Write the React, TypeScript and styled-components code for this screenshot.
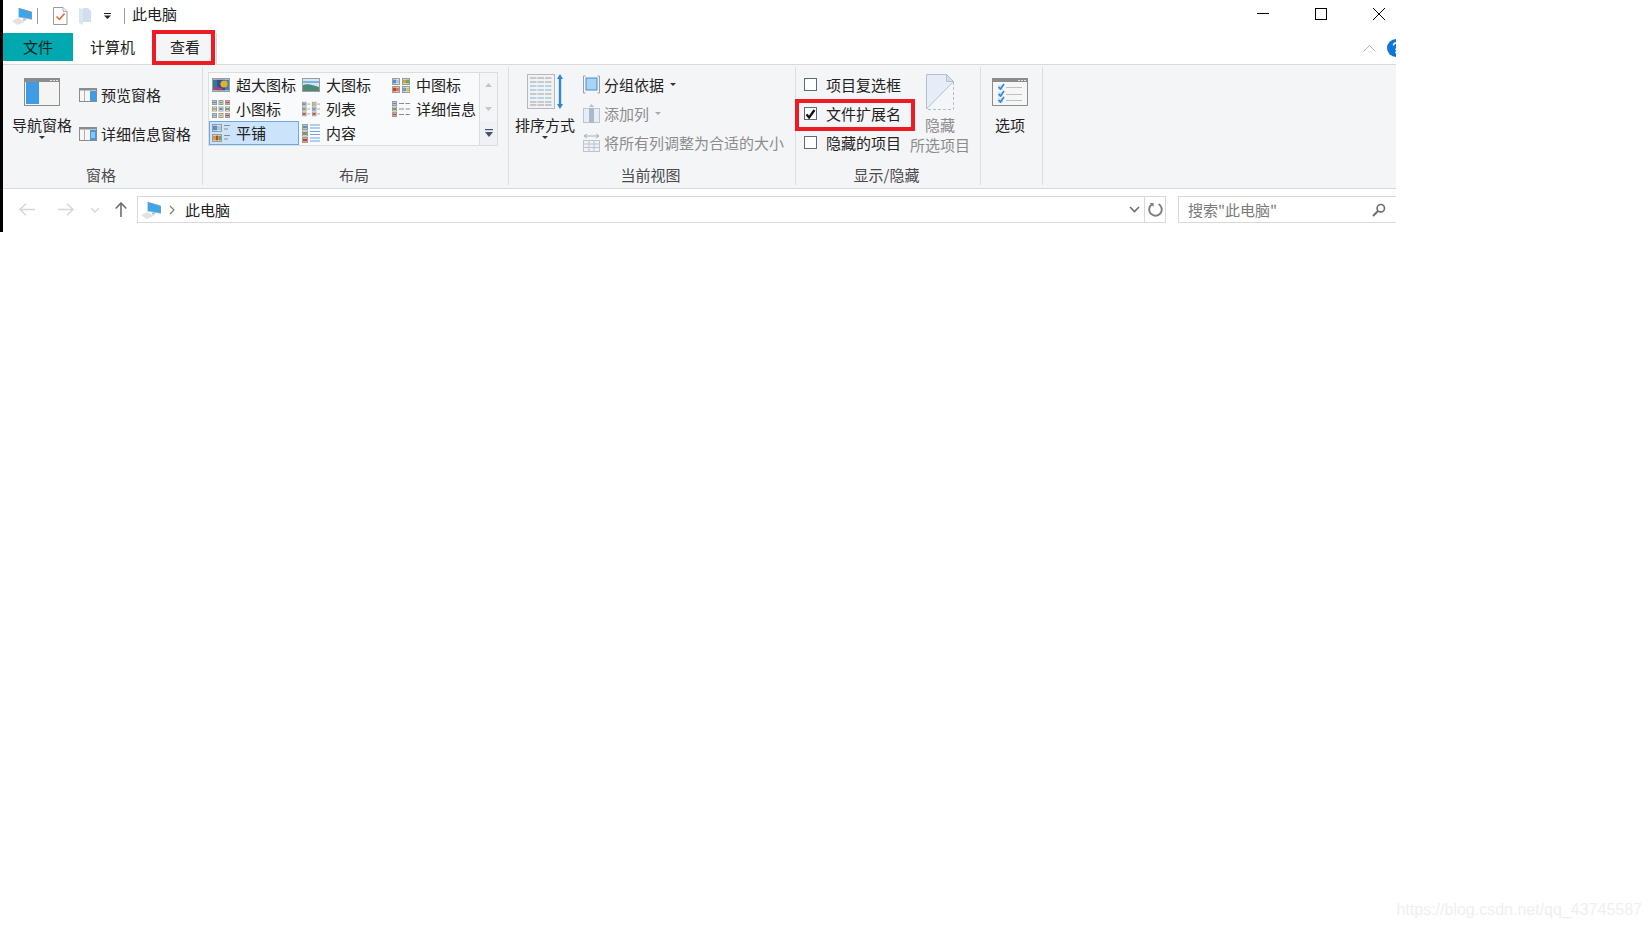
import React from "react";
import styled, { createGlobalStyle } from "styled-components";

const Global = createGlobalStyle`
  html, body { margin: 0; padding: 0; background: #fff; }
  body { font-family: "Noto Sans CJK SC", "Liberation Sans", sans-serif; font-size: 15px; color: #222; }
`;

const Page = styled.div`
  position: relative;
  width: 1651px;
  height: 928px;
  overflow: hidden;
  background: #fff;
`;
const Win = styled.div`
  width: 1393px;
  height: 232px;
  border-left: 3px solid #000;
  overflow: hidden;
  background: #fff;
  line-height: 20px;
`;
const Watermark = styled.div`
  position: absolute;
  right: 9px;
  bottom: 8px;
  font-family: "Liberation Sans", Arial, sans-serif;
  font-size: 16px;
  line-height: 20px;
  color: #efefef;
`;

/* title bar */
const TitleBar = styled.div`
  display: flex;
  align-items: center;
  height: 32px;
  padding-left: 9px;
`;
const QuickSlot = styled.div<{ $w: number }>`
  display: flex;
  align-items: center;
  width: ${(p) => p.$w}px;
  height: 100%;
`;
const QuickSep = styled.div`
  width: 1px;
  height: 16px;
  background: #9a9a9a;
`;
const TitleText = styled.div`
  color: #1c1c1c;
  margin-top: -5px;
`;
const WinControls = styled.div`
  margin-left: auto;
  display: flex;
  align-items: center;
  gap: 46px;
  padding-right: 11px;
  margin-top: -4px;
`;

/* tabs */
const TabRow = styled.div`
  display: flex;
  align-items: flex-start;
  height: 33px;
  box-sizing: border-box;
  padding-top: 1px;
  border-bottom: 1px solid #d9d9d9;
`;
const FileTab = styled.div`
  width: 70px;
  height: 28px;
  line-height: 28px;
  text-align: center;
  background: #00a8b0;
  color: #0d1f20;
`;
const Tab = styled.div`
  padding: 0 17px;
  height: 28px;
  line-height: 28px;
  color: #222;
`;
const ActiveTab = styled(Tab)`
  position: relative;
  height: 32px;
  margin-left: 1px;
  box-sizing: border-box;
  background: #f4f5f7;
  border-right: 1px solid #d9d9d9;
  line-height: 28px;
  padding: 0 16px 0 17px;
  z-index: 2;
`;
const RedBox = styled.div<{ $t: number; $r: number; $b: number; $l: number }>`
  position: absolute;
  top: ${(p) => p.$t}px;
  right: ${(p) => p.$r}px;
  bottom: ${(p) => p.$b}px;
  left: ${(p) => p.$l}px;
  border: 4px solid #ed1c24;
  pointer-events: none;
`;
const TabTools = styled.div`
  margin-left: auto;
  display: flex;
  align-items: center;
  gap: 11px;
  height: 30px;
  margin-right: -9px;
`;

/* ribbon */
const Ribbon = styled.div`
  display: flex;
  box-sizing: border-box;
  height: 124px;
  padding: 2px 0 3px;
  background: #f4f5f7;
  border-bottom: 1px solid #d9d9d9;
`;
const Group = styled.div<{ $w: number }>`
  display: flex;
  flex-direction: column;
  box-sizing: border-box;
  width: ${(p) => p.$w}px;
  border-right: 1px solid #dcdddf;
`;
const GroupBody = styled.div<{ $pl: number; $gap?: number }>`
  flex: 1;
  display: flex;
  align-items: flex-start;
  padding-left: ${(p) => p.$pl}px;
  gap: ${(p) => p.$gap ?? 0}px;
`;
const GroupLabel = styled.div`
  height: 20px;
  line-height: 20px;
  text-align: center;
  padding-right: 3px;
  color: #4a4a4a;
`;
const LargeButton = styled.div<{ $w: number; $muted?: boolean }>`
  display: flex;
  flex-direction: column;
  align-items: center;
  width: ${(p) => p.$w}px;
  padding-top: 5px;
  text-align: center;
  white-space: nowrap;
  color: ${(p) => (p.$muted ? "#8c8c8c" : "#222")};
`;
const LargeIcon = styled.div`
  display: flex;
  align-items: center;
  justify-content: center;
  height: 40px;
  margin-bottom: 3px;
`;
const Caret = styled.div`
  width: 0;
  height: 0;
  margin-top: 1px;
  border-left: 3.5px solid transparent;
  border-right: 3.5px solid transparent;
  border-top: 3.5px solid #333;
`;
const PaneColumn = styled.div`
  display: flex;
  flex-direction: column;
  gap: 19px;
  padding-top: 18px;
  margin-left: 3px;
`;
const IconText = styled.div<{ $muted?: boolean; $gap: number }>`
  display: flex;
  align-items: center;
  gap: ${(p) => p.$gap}px;
  height: 20px;
  white-space: nowrap;
  color: ${(p) => (p.$muted ? "#8c8c8c" : "#222")};
`;
const GalleryWrap = styled.div`
  display: flex;
  margin-top: 5px;
  margin-left: 5px;
  height: 74px;
  box-sizing: border-box;
  border: 1px solid #dcdddf;
`;
const Gallery = styled.div`
  display: grid;
  grid-template-columns: repeat(3, 90px);
  grid-auto-rows: 24px;
  background: #f9fafc;
  border-right: 1px solid #dcdddf;
`;
const GalleryItem = styled.div<{ $sel?: boolean }>`
  display: flex;
  align-items: center;
  gap: 6px;
  padding-left: 3px;
  box-sizing: border-box;
  white-space: nowrap;
  ${(p) => p.$sel && "background: #cce4fb; outline: 1px solid #6aa9e8; outline-offset: -1px;"}
`;
const GalleryScroll = styled.div`
  display: grid;
  grid-template-rows: 24px 24px 24px;
  width: 17px;
`;
const ScrollCell = styled.div<{ $more?: boolean }>`
  display: flex;
  align-items: center;
  justify-content: center;
  background: ${(p) => (p.$more ? "#f0f1f4" : "transparent")};
`;
const ViewColumn = styled.div`
  display: flex;
  flex-direction: column;
  padding-top: 3px;
`;
const ViewRow = styled.div<{ $muted?: boolean }>`
  display: flex;
  align-items: center;
  gap: 4px;
  height: 29px;
  white-space: nowrap;
  color: ${(p) => (p.$muted ? "#8c8c8c" : "#222")};
`;
const TinyCaret = styled.div<{ $muted?: boolean }>`
  width: 0;
  height: 0;
  margin-left: 2px;
  border-left: 3.5px solid transparent;
  border-right: 3.5px solid transparent;
  border-top: 3.5px solid ${(p) => (p.$muted ? "#aaa" : "#333")};
`;
const CheckColumn = styled.div`
  display: flex;
  flex-direction: column;
  padding-top: 3px;
`;
const CheckRow = styled.div`
  position: relative;
  display: flex;
  align-items: center;
  gap: 9px;
  height: 29px;
  white-space: nowrap;
`;
const CheckBox = styled.div`
  display: flex;
  align-items: center;
  justify-content: center;
  width: 13px;
  height: 13px;
  box-sizing: border-box;
  border: 1px solid #5d6a7e;
  background: #fff;
`;
const SecondLine = styled.div`
  height: 20px;
`;

/* address bar */
const AddressRow = styled.div`
  display: flex;
  height: 43px;
  box-sizing: border-box;
  padding-top: 7px;
`;
const NavButtons = styled.div`
  display: grid;
  grid-template-columns: 39px 32px 25px 22px;
  align-items: center;
  height: 27px;
  padding-left: 16px;
`;
const AddressBox = styled.div`
  display: flex;
  align-items: center;
  box-sizing: border-box;
  width: 1029px;
  height: 27px;
  border: 1px solid #d9d9d9;
  padding-left: 3px;
`;
const Crumb = styled.div`
  margin-left: 10px;
  color: #222;
`;
const ChevronWrap = styled.div`
  margin-left: 8px;
  display: flex;
`;
const AddressEnd = styled.div`
  margin-left: auto;
  display: flex;
  align-items: center;
  height: 100%;
`;
const DropSlot = styled.div`
  display: flex;
  align-items: center;
  justify-content: center;
  width: 19px;
  height: 100%;
  border-right: 1px solid #d9d9d9;
`;
const RefreshSlot = styled.div`
  display: flex;
  align-items: center;
  justify-content: center;
  width: 20px;
`;
const SearchBox = styled.div`
  display: flex;
  align-items: center;
  justify-content: space-between;
  box-sizing: border-box;
  flex: none;
  width: 218px;
  height: 27px;
  margin-left: 12px;
  border: 1px solid #d9d9d9;
  border-right: 0;
  padding: 0 10px 0 9px;
  color: #7a7a7a;
`;

/* drawings */
const PcIcon = () => (
  <svg width="20" height="18" viewBox="0 0 20 18">
    <polygon points="0,14 6.3,11 13,14.7 5.3,18" fill="#e2e2e2" />
    <polygon points="6.6,1.3 19.5,5 19.5,12.3 6.6,10" fill="#3ba7ea" />
    <path d="M6.6 1.3l12.9 3.7v7.3" fill="none" stroke="#6f8ea3" strokeWidth="0.8" />
    <path d="M6.6 10l12.9 2.3" fill="none" stroke="#9fb3c2" strokeWidth="0.8" />
    <rect x="11" y="11.5" width="3" height="2" fill="#b8c2cc" />
  </svg>
);
const CheckPage = () => (
  <svg width="15" height="18" viewBox="0 0 15 18">
    <path d="M.5.5h9.5l4 4v13H.5z" fill="#fff" stroke="#9a9a9a" />
    <path d="M10 .5v4h4" fill="#eee" stroke="#b5b5b5" />
    <path d="M3.5 9.5l3 3L11.5 6.5" fill="none" stroke="#e8622a" strokeWidth="1.5" />
  </svg>
);
const QuickFolder = () => (
  <svg width="13" height="18" viewBox="0 0 13 18">
    <path d="M0 1l4 1v16l-4-2z" fill="#dbe6f4" />
    <path d="M4 1h5l3 3v11H4z" fill="#d0dff0" />
  </svg>
);
const QuickDrop = () => (
  <svg width="7" height="6" viewBox="0 0 7 6">
    <rect x="0" y="0" width="7" height="1" fill="#222" />
    <polygon points="0,2.5 7,2.5 3.5,6" fill="#222" />
  </svg>
);
const MinIcon = () => (
  <svg width="12" height="12" viewBox="0 0 12 12">
    <rect x="0" y="5" width="12" height="1" fill="#000" />
  </svg>
);
const MaxIcon = () => (
  <svg width="12" height="12" viewBox="0 0 12 12">
    <rect x="0.5" y="0.5" width="11" height="11" fill="none" stroke="#000" />
  </svg>
);
const CloseIcon = () => (
  <svg width="12" height="12" viewBox="0 0 12 12">
    <path d="M0 0l12 12M12 0L0 12" stroke="#000" strokeWidth="1" />
  </svg>
);
const ChevronUp = () => (
  <svg width="13" height="8" viewBox="0 0 13 8">
    <path d="M.5 7.5l6-6 6 6" fill="none" stroke="#b5b5b5" />
  </svg>
);
const HelpBadge = () => (
  <svg width="18" height="18" viewBox="0 0 18 18">
    <circle cx="9" cy="9" r="9" fill="#0a78d4" />
    <path d="M6.5 6.5a2.6 2.6 0 1 1 3.6 2.4c-.8.4-1.1.9-1.1 2M9 12.4v1.8" fill="none" stroke="#fff" strokeWidth="1.5" />
  </svg>
);
const TitleDots = ({ x }: { x: number }) => (
  <path d={`M${x} 2.5h2M${x + 3} 2.5h2M${x + 6} 2.5h2`} stroke="#e4e4e4" strokeWidth="1" />
);
const NavPaneIcon = () => (
  <svg width="36" height="28" viewBox="0 0 36 28">
    <rect x="0.5" y="0.5" width="35" height="27" fill="#f4f4f4" stroke="#8c8c8c" />
    <rect x="1" y="1" width="34" height="3" fill="#8c8c8c" />
    <TitleDots x={26} />
    <rect x="2" y="4" width="13" height="22" fill="#3f9be3" />
  </svg>
);
const SidePaneIcon = ({ lines }: { lines?: boolean }) => (
  <svg width="18" height="14" viewBox="0 0 18 14">
    <rect x="0.5" y="0.5" width="17" height="13" fill="#f6f6f6" stroke="#8c8c8c" />
    <rect x="1" y="1" width="16" height="1.5" fill="#8c8c8c" />
    <rect x="5" y="2" width="1" height="11" fill="#b0b0b0" />
    <rect x="11" y="3" width="6" height="10" fill="#3f9be3" />
    {lines && <path d="M12 6h4M12 8h4M12 10h4" stroke="#dcecf9" />}
  </svg>
);
const Thumb = ({ x, y, w, h, c }: { x: number; y: number; w: number; h: number; c: string[] }) => {
  const cw = (w - 2) / c.length;
  return (
    <g>
      <rect x={x + 0.5} y={y + 0.5} width={w - 1} height={h - 1} fill="#fff" stroke="#9c9c9c" />
      {c.map((col, i) => (
        <rect key={i} x={x + 1 + i * cw} y={y + 1.5} width={cw} height={h - 3} fill={col} />
      ))}
    </g>
  );
};
const XlIcon = () => (
  <svg width="18" height="14" viewBox="0 0 18 14">
    <Thumb x={0} y={0} w={18} h={14} c={["#3a7a8c", "#2d4f9c", "#2d4f9c", "#4a7fb0"]} />
    <circle cx="12" cy="6" r="3.6" fill="#e5b21f" />
    <rect x="2" y="9" width="5" height="3" fill="#a63a8c" />
    <rect x="7" y="10" width="3" height="2" fill="#c8402a" />
  </svg>
);
const LargeViewIcon = () => (
  <svg width="18" height="14" viewBox="0 0 18 14">
    <rect x="0.5" y="0.5" width="17" height="13" fill="#d5e6f3" stroke="#9c9c9c" />
    <path d="M1 7c5-2 10 0 16 2v4H1z" fill="#4d8a78" />
    <path d="M1 3h16v2H1z" fill="#7fb5dc" />
  </svg>
);
const MediumIcon = () => (
  <svg width="18" height="15" viewBox="0 0 18 15">
    <Thumb x={0} y={0} w={8} h={7} c={["#5b8fc4", "#a8c8e4"]} />
    <Thumb x={10} y={0} w={8} h={7} c={["#d0a53a", "#6da35a"]} />
    <Thumb x={0} y={8} w={8} h={7} c={["#c8402a", "#e07a4a"]} />
    <Thumb x={10} y={8} w={8} h={7} c={["#6a9fcf", "#d9c45a"]} />
  </svg>
);
const SmallGridIcon = () => {
  const cols = ["#5b8fc4", "#7a9e5a", "#c8402a", "#c9b04a", "#5b8fc4", "#7a9e5a", "#6a9fcf", "#d0a53a", "#c8402a"];
  return (
    <svg width="18" height="18" viewBox="0 0 18 18">
      {cols.map((c, i) => (
        <Thumb key={i} x={(i % 3) * 6.5} y={Math.floor(i / 3) * 6.5} w={5} h={5} c={[c]} />
      ))}
    </svg>
  );
};
const ListIcon = () => (
  <svg width="18" height="16" viewBox="0 0 20 16">
    {[0, 5.5, 11].map((y, i) => (
      <g key={y}>
        <Thumb x={0} y={y} w={5} h={5} c={[["#5b8fc4", "#7a9e5a", "#c8402a"][i]]} />
        <path d={`M6 ${y + 2.5}h3`} stroke="#9c9c9c" />
        <Thumb x={11} y={y} w={5} h={5} c={[["#c9b04a", "#5b8fc4", "#c8402a"][i]]} />
        <path d={`M17 ${y + 2.5}h3`} stroke="#9c9c9c" />
      </g>
    ))}
  </svg>
);
const DetailsIcon = () => (
  <svg width="18" height="16" viewBox="0 0 18 16">
    {[0, 5.5, 11].map((y, i) => (
      <g key={y}>
        <Thumb x={0} y={y} w={5} h={5} c={[["#5b8fc4", "#7a9e5a", "#c8402a"][i]]} />
        <path d={`M7 ${y + 2.5}h5M13.5 ${y + 2.5}h4.5`} stroke="#8c8c8c" />
      </g>
    ))}
  </svg>
);
const TileIcon = () => (
  <svg width="18" height="18" viewBox="0 0 18 18">
    <Thumb x={0} y={0} w={10} h={8} c={["#5b8fc4", "#a8c8e4"]} />
    <path d="M12 1.5h6M12 5h4" stroke="#8c8c8c" />
    <Thumb x={0} y={10} w={10} h={8} c={["#c9a03a", "#c8402a", "#6da35a"]} />
    <path d="M12 11.5h6M12 15h4" stroke="#8c8c8c" />
  </svg>
);
const ContentIcon = () => (
  <svg width="18" height="19" viewBox="0 0 18 19">
    {[0, 6.5, 13].map((y, i) => (
      <g key={y}>
        <Thumb x={0} y={y} w={6} h={6} c={[["#5b8fc4", "#7a9e5a", "#c8402a"][i]]} />
        <path d={`M8 ${y + 1}h10M8 ${y + 4}h10`} stroke="#6aa3e0" />
      </g>
    ))}
  </svg>
);
const ScrollUp = () => (
  <svg width="7" height="4" viewBox="0 0 7 4"><polygon points="0,4 7,4 3.5,0" fill="#c2c6cc" /></svg>
);
const ScrollDown = () => (
  <svg width="7" height="4" viewBox="0 0 7 4"><polygon points="0,0 7,0 3.5,4" fill="#c2c6cc" /></svg>
);
const ScrollMore = () => (
  <svg width="8" height="8" viewBox="0 0 8 8">
    <rect width="8" height="1.2" fill="#44546a" />
    <polygon points="0,3 8,3 4,8" fill="#44546a" />
  </svg>
);
const SortIcon = () => (
  <svg width="36" height="40" viewBox="0 0 36 40">
    <rect x="0.5" y="2.5" width="27" height="34" fill="#f0f2f4" stroke="#b5b8bc" />
    {[6, 10, 14, 18, 22, 26, 30, 33].map((y, i) => (
      <path key={y} d={`M3 ${y}h22`} stroke={i === 2 || i === 3 || i === 5 ? "#b9d3e3" : "#c6c9cc"} strokeWidth="2" strokeDasharray="6.5 1" />
    ))}
    <path d="M33 5v30" stroke="#2f86d6" strokeWidth="2.4" />
    <path d="M30 7l3-5 3 5zM30 32l3 5 3-5z" fill="#2f86d6" />
  </svg>
);
const GroupByIcon = () => (
  <svg width="17" height="19" viewBox="0 0 17 19">
    <path d="M2.5 1H.5v17h2M14.5 1h2v17h-2" fill="none" stroke="#9aa0a6" />
    <rect x="3" y="3" width="11" height="12" fill="#a9d3f2" stroke="#3f8fd6" />
  </svg>
);
const AddColIcon = () => (
  <svg width="17" height="19" viewBox="0 0 17 19">
    <path d="M8.5 0l2.5 3H6z" fill="#b5bcc6" />
    <rect x="0.5" y="4.5" width="16" height="14" fill="#e8edf4" stroke="#bcc4ce" />
    <rect x="6" y="4" width="5" height="15" fill="#a9b8cc" />
  </svg>
);
const FitIcon = () => (
  <svg width="17" height="19" viewBox="0 0 17 19">
    <path d="M1 3h15M1 3l3-2M1 3l3 2M16 3l-3-2M16 3l-3 2" fill="none" stroke="#a5b0bc" />
    <rect x="0.5" y="7.5" width="16" height="11" fill="#eef1f5" stroke="#bcc4ce" />
    <path d="M1 11h15M1 14.5h15M6 8v10M11 8v10" stroke="#bcc4ce" />
  </svg>
);
const Tick = () => (
  <svg width="11" height="10" viewBox="0 0 11 10">
    <path d="M1.5 5.5l2.6 3L9.5 1" fill="none" stroke="#111" strokeWidth="2.3" />
  </svg>
);
const HideIcon = () => (
  <svg width="28" height="36" viewBox="0 0 28 36">
    <path d="M.5.5h20l7 7L.5 35z" fill="#e6edf8" stroke="#b4bed0" />
    <path d="M20.5.5v7h7z" fill="#d5deeb" stroke="#b4bed0" />
    <path d="M27.5 8v27.5H1" fill="none" stroke="#b4bed0" strokeDasharray="3 2" />
  </svg>
);
const OptionsIcon = () => (
  <svg width="36" height="28" viewBox="0 0 36 28">
    <rect x="0.5" y="0.5" width="35" height="27" fill="#f6f6f6" stroke="#8c8c8c" />
    <rect x="1" y="1" width="34" height="3" fill="#8c8c8c" />
    <TitleDots x={26} />
    {[7, 14, 20].map((y) => (
      <g key={y}>
        <rect x="6" y={y} width="5" height="5" fill="#cfe2f5" />
        <path d={`M6.5 ${y + 2}l2 2 3.5-5`} fill="none" stroke="#2f86d6" strokeWidth="1.6" />
        <path d={`M14 ${y + 2.5}h16`} stroke="#c0c0c0" />
      </g>
    ))}
  </svg>
);
const BackIcon = ({ flip, color }: { flip?: boolean; color: string }) => (
  <svg width="16" height="13" viewBox="0 0 16 13" style={flip ? { transform: "scaleX(-1)" } : undefined}>
    <path d="M1 6.5h15M7 .7L1 6.5l6 5.8" fill="none" stroke={color} strokeWidth="1.4" />
  </svg>
);
const DownSmall = () => (
  <svg width="10" height="6" viewBox="0 0 10 6">
    <path d="M1 1l4 4 4-4" fill="none" stroke="#d8d8d8" strokeWidth="1.4" />
  </svg>
);
const UpIcon = () => (
  <svg width="12" height="15" viewBox="0 0 12 15">
    <path d="M6 15V1M.7 6.5L6 1l5.3 5.5" fill="none" stroke="#6d6d6d" strokeWidth="1.6" />
  </svg>
);
const CrumbChevron = () => (
  <svg width="6" height="10" viewBox="0 0 6 10">
    <path d="M1 1l4 4-4 4" fill="none" stroke="#7d7d7d" strokeWidth="1.2" />
  </svg>
);
const AddrDrop = () => (
  <svg width="11" height="7" viewBox="0 0 11 7">
    <path d="M1 1l4.5 4.5L10 1" fill="none" stroke="#6d6d6d" strokeWidth="1.6" />
  </svg>
);
const RefreshIcon = () => (
  <svg width="15" height="15" viewBox="0 0 15 15">
    <path d="M4 2.2A6.3 6.3 0 1 0 10.6 2" fill="none" stroke="#7d7d7d" strokeWidth="1.9" />
    <path d="M1.6 1h4v4z" fill="#7d7d7d" />
  </svg>
);
const SearchIcon = () => (
  <svg width="14" height="14" viewBox="0 0 14 14">
    <circle cx="8.8" cy="5.2" r="3.7" fill="none" stroke="#6d6d6d" strokeWidth="1.6" />
    <path d="M6 8L1 13" stroke="#6d6d6d" strokeWidth="2" />
  </svg>
);

const galleryItems: [React.ReactNode, string, boolean?][] = [
  [<XlIcon />, "超大图标"],
  [<LargeViewIcon />, "大图标"],
  [<MediumIcon />, "中图标"],
  [<SmallGridIcon />, "小图标"],
  [<ListIcon />, "列表"],
  [<DetailsIcon />, "详细信息"],
  [<TileIcon />, "平铺", true],
  [<ContentIcon />, "内容"],
];

export default function App() {
  return (
    <Page>
      <Global />
      <Win>
        <TitleBar>
          <QuickSlot $w={25}><PcIcon /></QuickSlot>
          <QuickSlot $w={16}><QuickSep /></QuickSlot>
          <QuickSlot $w={26}><CheckPage /></QuickSlot>
          <QuickSlot $w={25}><QuickFolder /></QuickSlot>
          <QuickSlot $w={20}><QuickDrop /></QuickSlot>
          <QuickSlot $w={8}><QuickSep /></QuickSlot>
          <TitleText>此电脑</TitleText>
          <WinControls>
            <MinIcon />
            <MaxIcon />
            <CloseIcon />
          </WinControls>
        </TitleBar>

        <TabRow>
          <FileTab>文件</FileTab>
          <Tab>计算机</Tab>
          <ActiveTab>
            查看
            <RedBox $t={-3} $r={1} $b={0} $l={-1} />
          </ActiveTab>
          <TabTools>
            <ChevronUp />
            <HelpBadge />
          </TabTools>
        </TabRow>

        <Ribbon>
          <Group $w={200}>
            <GroupBody $pl={5}>
              <LargeButton $w={68}>
                <LargeIcon><NavPaneIcon /></LargeIcon>
                导航窗格
                <Caret />
              </LargeButton>
              <PaneColumn>
                <IconText $gap={4}><SidePaneIcon />预览窗格</IconText>
                <IconText $gap={4}><SidePaneIcon lines />详细信息窗格</IconText>
              </PaneColumn>
            </GroupBody>
            <GroupLabel>窗格</GroupLabel>
          </Group>

          <Group $w={306}>
            <GroupBody $pl={0}>
              <GalleryWrap>
                <Gallery>
                  {galleryItems.map(([icon, label, sel]) => (
                    <GalleryItem key={label} $sel={sel}>
                      {icon}
                      {label}
                    </GalleryItem>
                  ))}
                </Gallery>
                <GalleryScroll>
                  <ScrollCell><ScrollUp /></ScrollCell>
                  <ScrollCell><ScrollDown /></ScrollCell>
                  <ScrollCell $more><ScrollMore /></ScrollCell>
                </GalleryScroll>
              </GalleryWrap>
            </GroupBody>
            <GroupLabel>布局</GroupLabel>
          </Group>

          <Group $w={287}>
            <GroupBody $pl={6} $gap={8}>
              <LargeButton $w={60}>
                <LargeIcon><SortIcon /></LargeIcon>
                排序方式
                <Caret />
              </LargeButton>
              <ViewColumn>
                <ViewRow>
                  <GroupByIcon />
                  分组依据
                  <TinyCaret />
                </ViewRow>
                <ViewRow $muted>
                  <AddColIcon />
                  添加列
                  <TinyCaret $muted />
                </ViewRow>
                <ViewRow $muted>
                  <FitIcon />
                  将所有列调整为合适的大小
                </ViewRow>
              </ViewColumn>
            </GroupBody>
            <GroupLabel>当前视图</GroupLabel>
          </Group>

          <Group $w={185}>
            <GroupBody $pl={8} $gap={9}>
              <CheckColumn>
                <CheckRow><CheckBox />项目复选框</CheckRow>
                <CheckRow>
                  <CheckBox><Tick /></CheckBox>
                  文件扩展名
                  <RedBox $t={0} $r={-14} $b={-3} $l={-9} />
                </CheckRow>
                <CheckRow><CheckBox />隐藏的项目</CheckRow>
              </CheckColumn>
              <LargeButton $w={60} $muted>
                <LargeIcon><HideIcon /></LargeIcon>
                隐藏
                <SecondLine>所选项目</SecondLine>
              </LargeButton>
            </GroupBody>
            <GroupLabel>显示/隐藏</GroupLabel>
          </Group>

          <Group $w={62}>
            <GroupBody $pl={11}>
              <LargeButton $w={36}>
                <LargeIcon><OptionsIcon /></LargeIcon>
                选项
              </LargeButton>
            </GroupBody>
          </Group>
        </Ribbon>

        <AddressRow>
          <NavButtons>
            <BackIcon color="#d6d6d6" />
            <BackIcon flip color="#d6d6d6" />
            <DownSmall />
            <UpIcon />
          </NavButtons>
          <AddressBox>
            <PcIcon />
            <ChevronWrap><CrumbChevron /></ChevronWrap>
            <Crumb>此电脑</Crumb>
            <AddressEnd>
              <DropSlot><AddrDrop /></DropSlot>
              <RefreshSlot><RefreshIcon /></RefreshSlot>
            </AddressEnd>
          </AddressBox>
          <SearchBox>
            搜索"此电脑"
            <SearchIcon />
          </SearchBox>
        </AddressRow>
      </Win>
      <Watermark>https://blog.csdn.net/qq_43745587</Watermark>
    </Page>
  );
}
